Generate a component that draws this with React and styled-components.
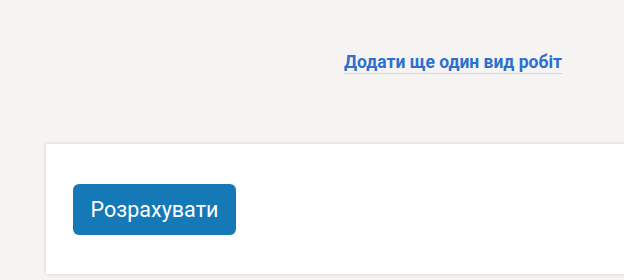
import React from "react";
import styled, { createGlobalStyle } from "styled-components";

const Global = createGlobalStyle`
  html, body { margin: 0; padding: 0; }
  body { background: #f5f4f2; font-family: Roboto, "Noto Sans", Arial, sans-serif; }
`;

const Page = styled.div`
  width: 624px;
  height: 280px;
  overflow: hidden;
  display: flex;
  flex-direction: column;
  padding-left: 46px;
  box-sizing: border-box;
`;

const LinkRow = styled.div`
  display: flex;
  justify-content: flex-end;
  align-items: flex-start;
  padding-top: 52px;
  padding-right: 62px;
  height: 144px;
  box-sizing: border-box;
  flex-shrink: 0;
`;

const AddLink = styled.a`
  font-size: 17.5px;
  font-weight: 700;
  color: #2d6fce;
  text-decoration: none;
  line-height: 21px;
  border-bottom: 1px solid #c8daf2;
  cursor: pointer;
`;

const Card = styled.div`
  background: #fff;
  height: 130px;
  margin-right: -20px;
  box-shadow: 0 0 4px rgba(0, 0, 0, 0.15);
  padding: 40px 27px;
  box-sizing: border-box;
  flex-shrink: 0;
`;

const Button = styled.button`
  height: 51px;
  width: 163px;
  padding: 0;
  background: #1479b6;
  color: #fff;
  border: none;
  border-radius: 6px;
  font-family: Roboto, sans-serif;
  font-size: 21.5px;
  cursor: pointer;
`;

export default function App() {
  return (
    <Page>
      <Global />
      <LinkRow>
        <AddLink>Додати ще один вид робіт</AddLink>
      </LinkRow>
      <Card>
        <Button>Розрахувати</Button>
      </Card>
    </Page>
  );
}
